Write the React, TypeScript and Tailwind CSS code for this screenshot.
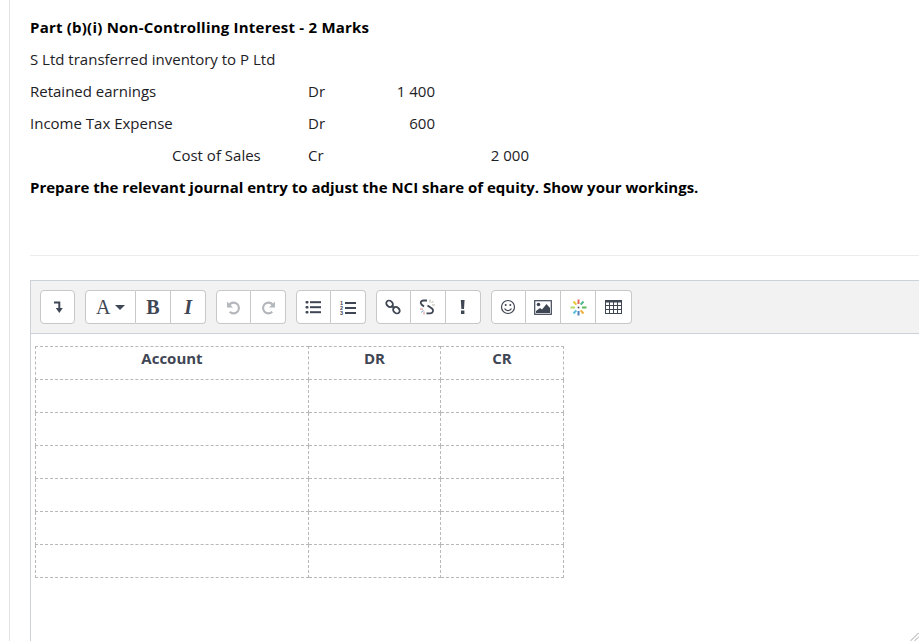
import React from "react";

const dark = "#3f4654";
const gray = "#b3b6bb";

function Collapse() {
  return (
    <svg width="14" height="14" viewBox="0 0 14 14" fill="none">
      <path d="M3 2.500h5.300V9" stroke={dark} strokeWidth="2" />
      <path d="M4.800 8h7L8.300 13z" fill={dark} />
    </svg>
  );
}
function Undo({ flip }: { flip?: boolean }) {
  return (
    <svg width="15" height="15" viewBox="0 0 14 14" fill="none" className={flip ? "-scale-x-100" : ""}>
      <path d="M3.300 4.200A5 5 0 1 1 3.500 11" stroke={gray} strokeWidth="2" />
      <path d="M1 1.500V7h5.500z" fill={gray} />
    </svg>
  );
}
function ListUl() {
  return (
    <svg width="16" height="14" viewBox="0 0 16 14" fill={dark}>
      <rect x="0.500" y="1" width="3" height="2.500" rx="1" />
      <rect x="0.500" y="6" width="3" height="2.500" rx="1" />
      <rect x="0.500" y="11" width="3" height="2.500" rx="1" />
      <rect x="5" y="1.200" width="11" height="2" />
      <rect x="5" y="6.200" width="11" height="2" />
      <rect x="5" y="11.200" width="11" height="2" />
    </svg>
  );
}
function ListOl() {
  return (
    <svg width="16" height="15" viewBox="0 0 16 15" fill={dark}>
      <text x="0" y="5" fontSize="5.500" fontWeight="700" fontFamily="Liberation Sans, sans-serif">1</text>
      <text x="0" y="10" fontSize="5.500" fontWeight="700" fontFamily="Liberation Sans, sans-serif">2</text>
      <text x="0" y="15" fontSize="5.500" fontWeight="700" fontFamily="Liberation Sans, sans-serif">3</text>
      <rect x="5" y="2" width="11" height="2" />
      <rect x="5" y="7" width="11" height="2" />
      <rect x="5" y="12" width="11" height="2" />
    </svg>
  );
}
function Link() {
  return (
    <svg width="16" height="16" viewBox="0 0 16 16" fill="none" stroke={dark} strokeWidth="1.800">
      <ellipse cx="4.600" cy="4.800" rx="3.600" ry="2.900" transform="rotate(40 4.600 4.800)" />
      <ellipse cx="11.400" cy="11.200" rx="3.600" ry="2.900" transform="rotate(40 11.400 11.200)" />
      <path d="M6.500 6.500l3 2.800" />
    </svg>
  );
}
function Unlink() {
  return (
    <svg width="17" height="16" viewBox="0 0 17 16" fill="none">
      <path d="M8 1.500H4.500C2 1.500.8 3.500 2.500 5.500L5 7.500" stroke={dark} strokeWidth="1.800" />
      <path d="M8.500 6.500L13 9.500c2 1.800 1 4.800-1.500 4.800H7.500" stroke={dark} strokeWidth="1.800" />
      <path d="M11 .5v3M14.500 2l-2 2M16 6h-3" stroke="#b9b9a6" strokeWidth="1" />
      <path d="M1 10h3" stroke="#d98a8a" strokeWidth="1" />
      <path d="M2 13.500L4.500 11.500" stroke="#7fa6d9" strokeWidth="1" />
      <path d="M5 15.500v-3" stroke="#d98a8a" strokeWidth="1" />
    </svg>
  );
}
function Exclaim() {
  return (
    <svg width="6" height="14" viewBox="0 0 6 14" fill={dark}>
      <path d="M.8 0h3.800L4 9H1.400z" />
      <rect x="1" y="10.500" width="3.400" height="3.500" />
    </svg>
  );
}
function Smile() {
  return (
    <svg width="16" height="16" viewBox="0 0 16 16" fill="none" stroke={dark} strokeWidth="1.200">
      <circle cx="8" cy="8" r="6.500" />
      <circle cx="5.700" cy="6" r="1" fill={dark} stroke="none" />
      <circle cx="10.300" cy="6" r="1" fill={dark} stroke="none" />
      <path d="M4.500 9.500c1.500 2.800 5.500 2.800 7 0" />
    </svg>
  );
}
function Pic() {
  return (
    <svg width="18" height="15" viewBox="0 0 18 15" fill="none">
      <rect x="0.700" y="0.700" width="16.600" height="13.600" stroke={dark} strokeWidth="1.200" />
      <path d="M2 13V11l4-3 2 1.500L12.500 4 16 8v5z" fill={dark} />
      <circle cx="4.500" cy="4.500" r="1.800" fill={dark} />
    </svg>
  );
}
function Sparkle() {
  return (
    <svg width="17" height="17" viewBox="0 0 17 17" fill="none" strokeWidth="2">
      <path d="M8.500 0.500v4.500" stroke="#e06a5a" />
      <path d="M13.500 2.500l-2.800 3.200" stroke="#4fb58f" />
      <path d="M16.500 8.500h-4.500" stroke="#5cb85c" />
      <path d="M13.500 14.500l-2.800-3.200" stroke="#eeb13c" />
      <path d="M8.500 16.500V12" stroke="#4f83b8" />
      <path d="M3.500 14.500l2.800-3.200" stroke="#5bc0de" />
      <path d="M0.500 8.500h4.500" stroke="#b5d96a" />
      <path d="M3.500 2.500l2.800 3.200" stroke="#e8c53a" />
      <rect x="7.700" y="7.700" width="1.600" height="1.600" fill={dark} stroke="none" />
    </svg>
  );
}
function Grid() {
  return (
    <svg width="17" height="14" viewBox="0 0 17 14" fill="none" stroke={dark} strokeWidth="1">
      <rect x="0.500" y="0.500" width="16" height="13" />
      <path d="M0 1.500h17" strokeWidth="2" />
      <path d="M0 5.500h17M0 9.500h17M4.500 1v13M8.500 1v13M12.500 1v13" />
    </svg>
  );
}

function Btn({ children, first, last, wide }: { children: React.ReactNode; first?: boolean; last?: boolean; wide?: boolean }) {
  return (
    <button
      className={`${wide ? "w-[51px]" : "w-[35.2px]"} ${first ? "border-l rounded-l-[4px]" : ""} ${last ? "rounded-r-[4px]" : ""} h-[34px] flex items-center justify-center bg-white border-y border-r border-[#c8c8c8]`}
    >
      {children}
    </button>
  );
}

function Group({ items, wideFirst }: { items: React.ReactNode[]; wideFirst?: boolean }) {
  return (
    <div className="flex">
      {items.map((it, i) => (
        <Btn key={i} first={i === 0} last={i === items.length - 1} wide={wideFirst && i === 0}>
          {it}
        </Btn>
      ))}
    </div>
  );
}

const serif = "font-['Liberation_Serif',serif] text-[#3f4654] text-[20px] leading-none";

function JournalRow({ name, indent, side, dr, cr }: { name: string; indent?: boolean; side: string; dr?: string; cr?: string }) {
  return (
    <div className="flex h-8 items-center">
      <span className={`w-[278px] ${indent ? "pl-[142px]" : ""}`}>{name}</span>
      <span className="w-[60px]">{side}</span>
      <span className="w-[67px] text-right">{dr}</span>
      <span className="w-[94px] text-right">{cr}</span>
    </div>
  );
}

export default function App() {
  const rows = [0, 1, 2, 3, 4, 5, 6];
  return (
    <div className="relative w-[919px] h-[641px] overflow-hidden bg-white font-['Open_Sans','Noto_Sans',sans-serif] text-[15px] text-[#1d2125]">
      <div className="absolute left-[9px] top-0 bottom-0 w-px bg-[#e3e3e3]" />
      <div className="pl-[30px] pt-[11px]">
        <p className="h-8 flex items-center font-bold text-black tracking-[0.22px]">Part (b)(i) Non-Controlling Interest - 2 Marks</p>
        <p className="h-8 flex items-center">S Ltd transferred inventory to P Ltd</p>
        <JournalRow name="Retained earnings" side="Dr" dr="1 400" />
        <JournalRow name="Income Tax Expense" side="Dr" dr="600" />
        <JournalRow name="Cost of Sales" indent side="Cr" cr="2 000" />
        <p className="h-8 flex items-center font-bold text-black">Prepare the relevant journal entry to adjust the NCI share of equity. Show your workings.</p>
        <div className="h-px bg-[#ececec] mt-[52px] mb-[24px]" />
        <div className="border-l border-t border-[#ccd2d9] h-[400px]">
          <div className="h-[53px] bg-[#f2f2f2] border-b border-[#ccd2d9] pl-[9px] pt-[9px] flex gap-[9.6px]">
            <Group items={[<Collapse />]} />
            <Group
              wideFirst
              items={[
                <span className={`flex items-center gap-[4px] ${serif}`}>
                  A
                  <svg width="10" height="5" viewBox="0 0 10 5"><path d="M0 0h10L5 5z" fill={dark} /></svg>
                </span>,
                <span className={`${serif} font-bold`}>B</span>,
                <span className={`${serif} italic font-bold`}>I</span>,
              ]}
            />
            <Group items={[<Undo />, <Undo flip />]} />
            <Group items={[<ListUl />, <ListOl />]} />
            <Group items={[<Link />, <Unlink />, <Exclaim />]} />
            <Group items={[<Smile />, <Pic />, <Sparkle />, <Grid />]} />
          </div>
          <div className="pl-[4px] pt-[12px]">
            <table className="border-collapse table-fixed w-[528px]">
              <colgroup>
                <col className="w-[273px]" />
                <col className="w-[132px]" />
                <col className="w-[123px]" />
              </colgroup>
              <tbody>
                {rows.map((r) => (
                  <tr key={r} className="h-[33px]">
                    {["Account", "DR", "CR"].map((h) => (
                      <td key={h} className="border border-dashed border-[#b8b8b8] p-0 pb-[10px] text-center font-bold leading-5 text-[#3f4654]">
                        {r === 0 ? h : ""}
                      </td>
                    ))}
                  </tr>
                ))}
              </tbody>
            </table>
          </div>
        </div>
      </div>
      <svg className="absolute right-0 bottom-0" width="10" height="10" viewBox="0 0 10 10">
        <path d="M2 9.500L9.500 2M6 9.500L9.500 6" stroke="#666" strokeWidth="1" strokeDasharray="1 .5" />
      </svg>
    </div>
  );
}
